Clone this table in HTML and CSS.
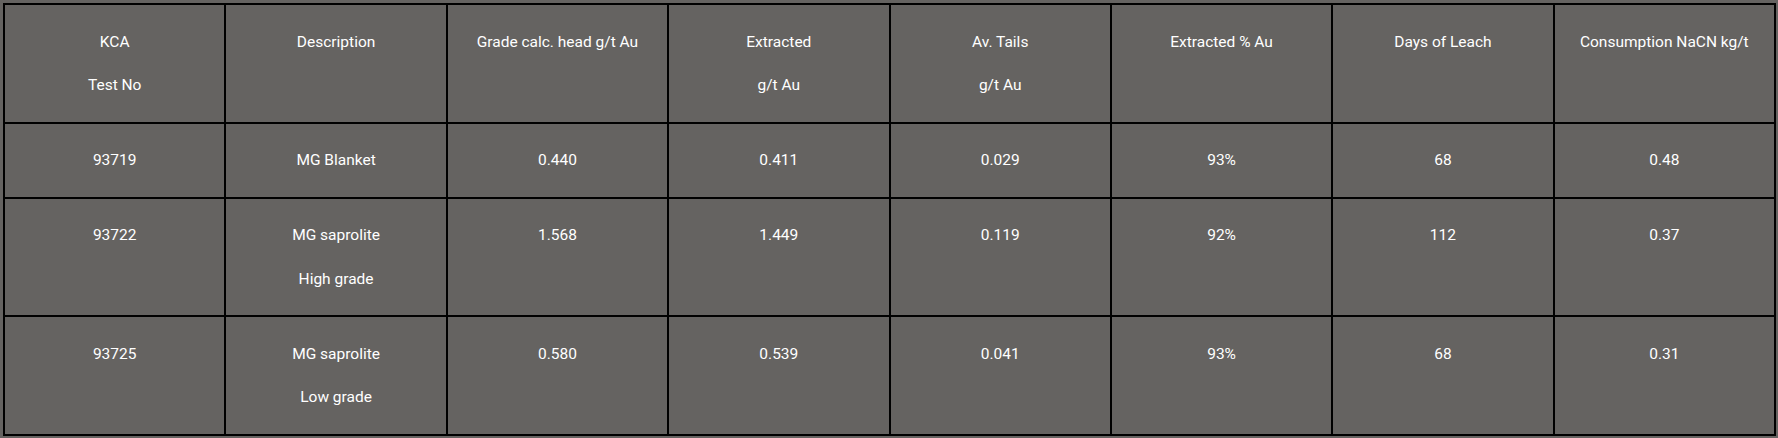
FILE: index.html
```html
<!DOCTYPE html>
<html lang="en">
<head>
<meta charset="utf-8">
<title>KCA Test Results</title>
<link rel="stylesheet" href="styles.css">
</head>
<body>
<table class="results">
  <thead>
    <tr>
      <th><p>KCA</p><p>Test No</p></th>
      <th><p>Description</p></th>
      <th><p>Grade calc. head g/t Au</p></th>
      <th><p>Extracted</p><p>g/t Au</p></th>
      <th><p>Av. Tails</p><p>g/t Au</p></th>
      <th><p>Extracted % Au</p></th>
      <th><p>Days of Leach</p></th>
      <th><p>Consumption NaCN kg/t</p></th>
    </tr>
  </thead>
  <tbody>
    <tr>
      <td><p>93719</p></td>
      <td><p>MG Blanket</p></td>
      <td><p>0.440</p></td>
      <td><p>0.411</p></td>
      <td><p>0.029</p></td>
      <td><p>93%</p></td>
      <td><p>68</p></td>
      <td><p>0.48</p></td>
    </tr>
    <tr>
      <td><p>93722</p></td>
      <td><p>MG saprolite</p><p>High grade</p></td>
      <td><p>1.568</p></td>
      <td><p>1.449</p></td>
      <td><p>0.119</p></td>
      <td><p>92%</p></td>
      <td><p>112</p></td>
      <td><p>0.37</p></td>
    </tr>
    <tr>
      <td><p>93725</p></td>
      <td><p>MG saprolite</p><p>Low grade</p></td>
      <td><p>0.580</p></td>
      <td><p>0.539</p></td>
      <td><p>0.041</p></td>
      <td><p>93%</p></td>
      <td><p>68</p></td>
      <td><p>0.31</p></td>
    </tr>
  </tbody>
</table>
</body>
</html>
```

FILE: styles.css
```css
html, body {
  background: #656361;
}
body {
  margin: 3px 2px 3px 3px;
  font-family: Roboto, "Liberation Sans", Arial, sans-serif;
  font-size: 15.5px;
  color: #ffffff;
}
.results {
  width: 100%;
  table-layout: fixed;
  border-collapse: separate;
  border-spacing: 0;
  border: 1px solid #000;
}
.results th,
.results td {
  border: 1px solid #000;
  padding: 5.75px 6px 3.75px;
  vertical-align: top;
  text-align: center;
  font-weight: 400;
}
.results p {
  margin: 20px 0;
  line-height: 23.5px;
}
```
